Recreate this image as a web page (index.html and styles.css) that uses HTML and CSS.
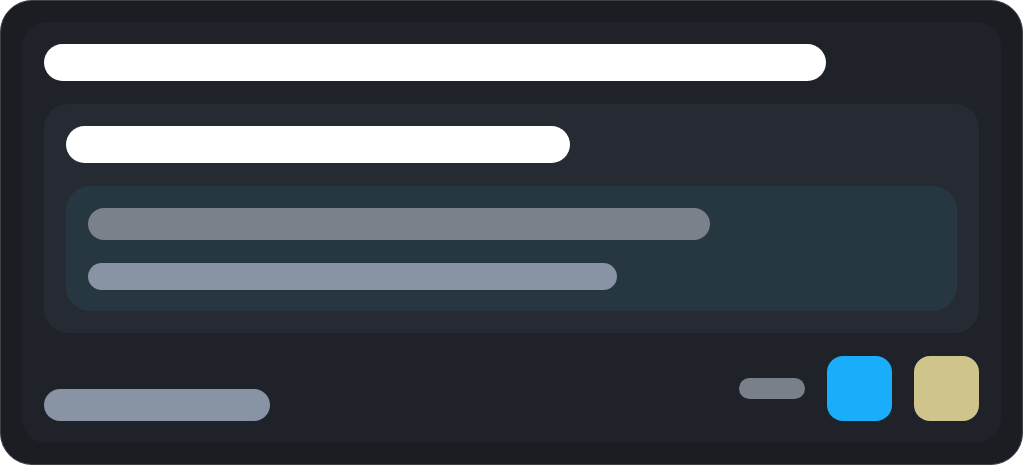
FILE: index.html
```html
<!DOCTYPE html>
<html>
<head>
<meta charset="utf-8">
<link rel="stylesheet" href="styles.css">
</head>
<body>
<div class="card">
  <div class="panel">
    <div class="bar title"></div>
    <div class="section">
      <div class="bar subtitle"></div>
      <div class="box">
        <div class="bar line1"></div>
        <div class="bar line2"></div>
      </div>
    </div>
    <div class="footer">
      <div class="bar meta"></div>
      <div class="actions">
        <div class="bar chip"></div>
        <div class="sq blue"></div>
        <div class="sq tan"></div>
      </div>
    </div>
  </div>
</div>
</body>
</html>
```
FILE: styles.css
```css
html, body { margin: 0; padding: 0; background: #ffffff; }
body { font-family: "Liberation Sans", sans-serif; }
.card {
  box-sizing: border-box;
  width: 1023px;
  height: 465px;
  background: #1a1d22;
  border: 1px solid #3f4146;
  border-radius: 32px;
  padding: 21px;
}
.panel {
  box-sizing: border-box;
  height: 100%;
  background: #1f2229;
  border-radius: 24px;
  padding: 22px;
  display: flex;
  flex-direction: column;
}
.bar { border-radius: 999px; }
.title { width: 782px; height: 37px; background: #ffffff; flex: none; }
.section {
  margin-top: 23px;
  background: #262a32;
  border-radius: 24px;
  padding: 22px;
  display: flex;
  flex-direction: column;
}
.subtitle { width: 504px; height: 37px; background: #ffffff; }
.box {
  margin-top: 23px;
  background: #263741;
  border-radius: 24px;
  padding: 22px 22px 21px;
  display: flex;
  flex-direction: column;
}
.line1 { width: 622px; height: 32px; background: #7a818b; }
.line2 { width: 529px; height: 27px; margin-top: 23px; background: #8893a3; }
.footer {
  margin-top: 23px;
  display: flex;
  justify-content: space-between;
  align-items: flex-end;
}
.meta { width: 226px; height: 32px; background: #8893a3; }
.actions { display: flex; align-items: flex-start; gap: 22px; }
.chip { width: 66px; height: 21px; margin-top: 22px; background: #7a808a; }
.sq { width: 65px; height: 65px; border-radius: 16px; }
.blue { background: #1aaefa; }
.tan { background: #cfc48c; }
```
